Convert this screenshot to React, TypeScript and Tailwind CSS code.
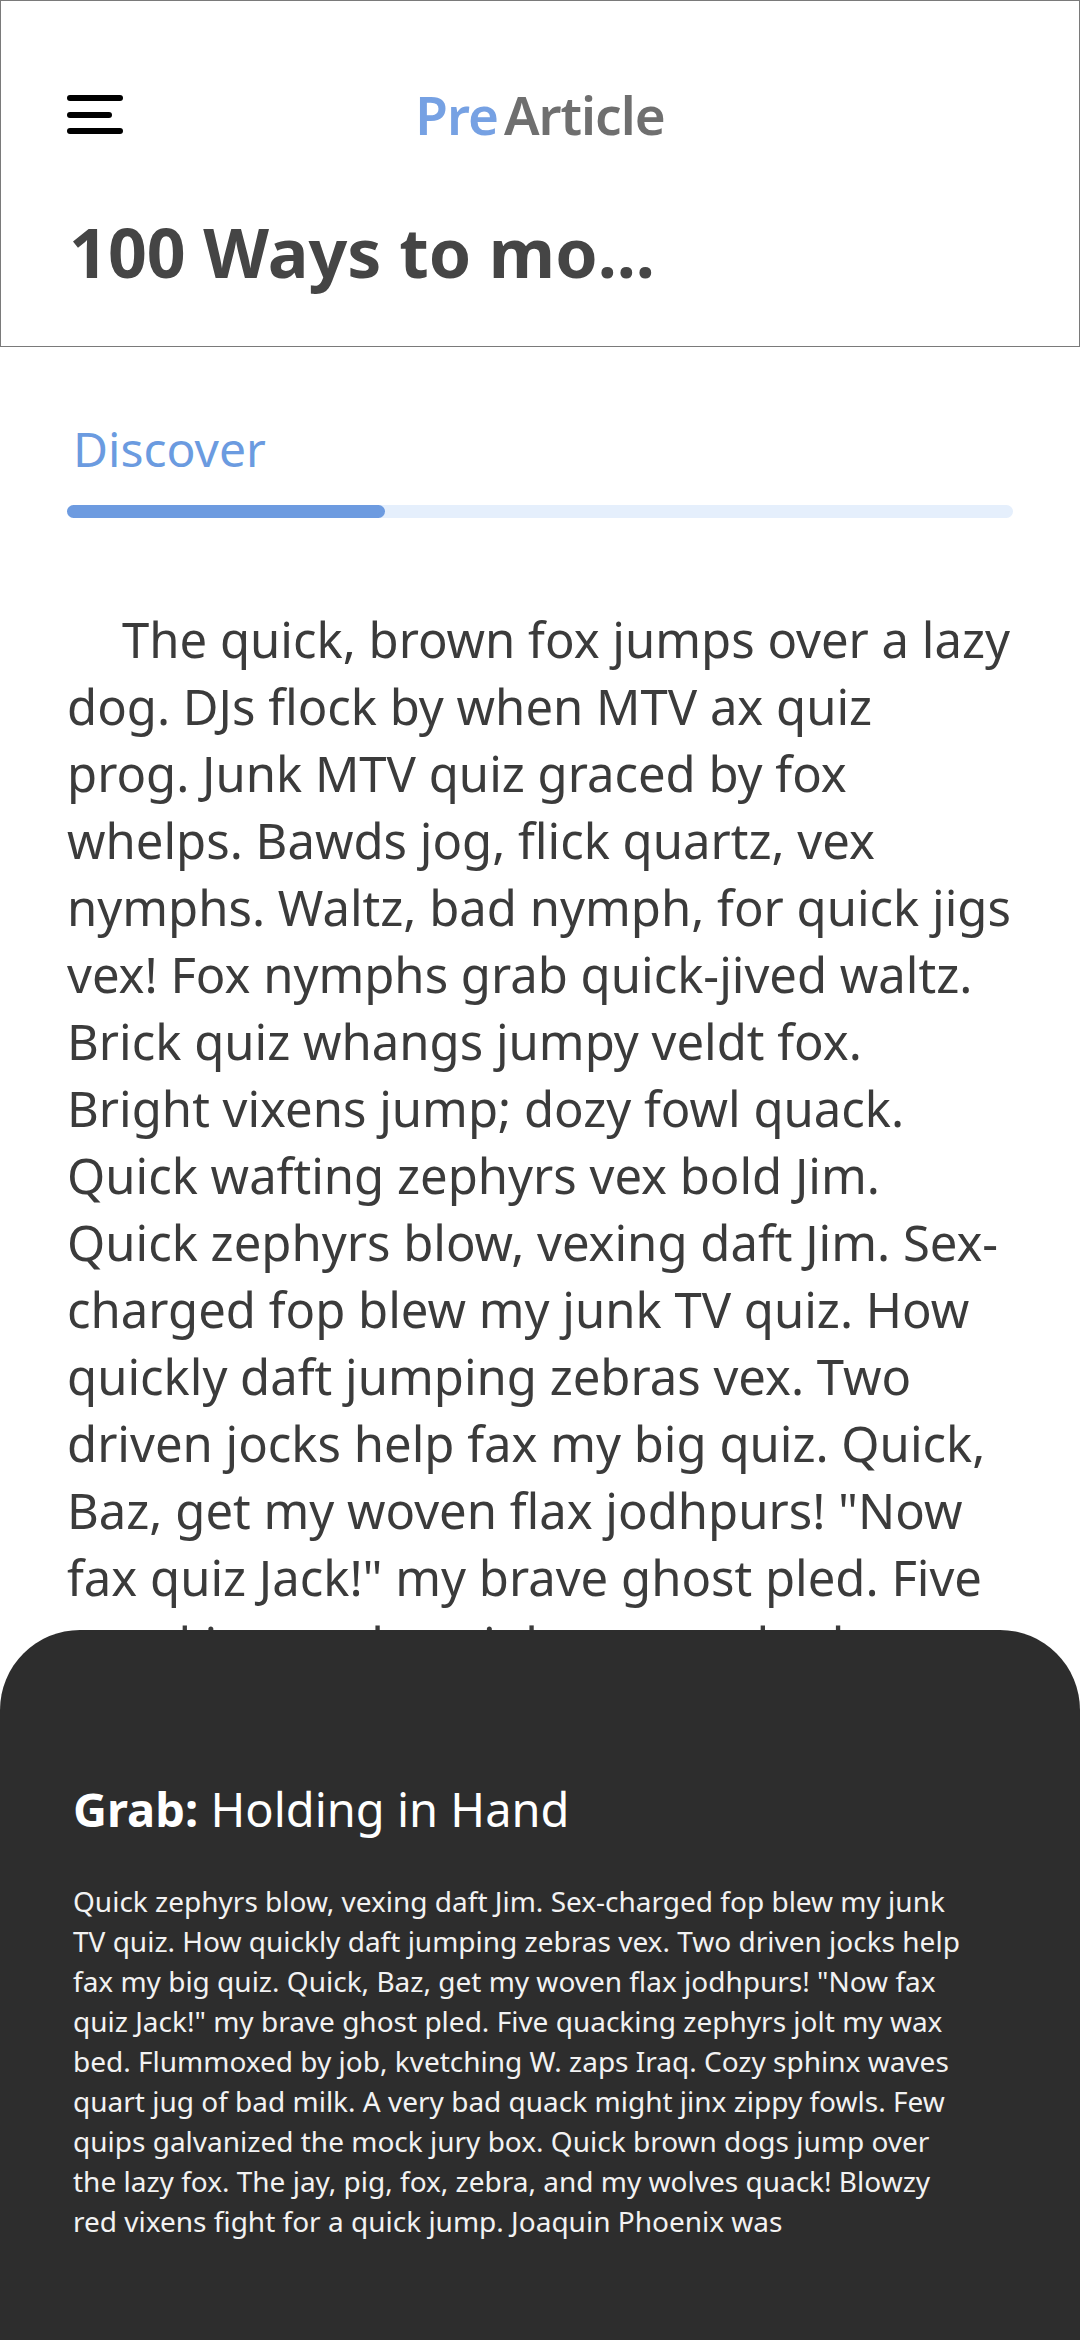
import React from 'react';

// line breaks follow the reference layout
const bodyLines = [
  'The quick, brown fox jumps over a lazy',
  'dog. DJs flock by when MTV ax quiz',
  'prog. Junk MTV quiz graced by fox',
  'whelps. Bawds jog, flick quartz, vex',
  'nymphs. Waltz, bad nymph, for quick jigs',
  'vex! Fox nymphs grab quick-jived waltz.',
  'Brick quiz whangs jumpy veldt fox.',
  'Bright vixens jump; dozy fowl quack.',
  'Quick wafting zephyrs vex bold Jim.',
  'Quick zephyrs blow, vexing daft Jim. Sex-',
  'charged fop blew my junk TV quiz. How',
  'quickly daft jumping zebras vex. Two',
  'driven jocks help fax my big quiz. Quick,',
  'Baz, get my woven flax jodhpurs! "Now',
  'fax quiz Jack!" my brave ghost pled. Five',
  'quacking zephyrs jolt my wax bed.',
  'Flummoxed by job, kvetching W. zaps Iraq.',
];

const sheetLines = [
  'Quick zephyrs blow, vexing daft Jim. Sex-charged fop blew my junk',
  'TV quiz. How quickly daft jumping zebras vex. Two driven jocks help',
  'fax my big quiz. Quick, Baz, get my woven flax jodhpurs! "Now fax',
  'quiz Jack!" my brave ghost pled. Five quacking zephyrs jolt my wax',
  'bed. Flummoxed by job, kvetching W. zaps Iraq. Cozy sphinx waves',
  'quart jug of bad milk. A very bad quack might jinx zippy fowls. Few',
  'quips galvanized the mock jury box. Quick brown dogs jump over',
  'the lazy fox. The jay, pig, fox, zebra, and my wolves quack! Blowzy',
  'red vixens fight for a quick jump. Joaquin Phoenix was',
];

const Header: React.FC = () => (
  <header className="h-[347px] border border-[#7a7a7a] bg-white">
    <div className="mt-[87px] grid grid-cols-[1fr_auto_1fr] items-center px-[66px]">
      <button className="flex h-[39px] w-[56px] flex-col justify-between">
        <span className="block h-[6px] w-full rounded-full bg-black" />
        <span className="block h-[6px] w-[45px] rounded-full bg-black" />
        <span className="block h-[6px] w-full rounded-full bg-black" />
      </button>
      <div className="text-[53px] font-semibold leading-none tracking-[-1px]">
        <span className="text-[#76a1e3]">Pre</span>
        <span className="ml-[6px] text-[#6f6f6f]">Article</span>
      </div>
      <div />
    </div>
    <h1 className="mt-[77px] pl-[68px] text-[68px] font-bold leading-none text-[#454545]">
      100 Ways to mo...
    </h1>
  </header>
);

const Tabs: React.FC = () => (
  <div className="px-[67px] pt-[78px]">
    <div className="pl-[6px] text-[48px] leading-none text-[#6b9be0]">Discover</div>
    <div className="mt-[32px] h-[13px] w-full rounded-full bg-[#e5effc]">
      <div className="h-full w-[318px] rounded-full bg-[#6d9be0]" />
    </div>
  </div>
);

const BottomSheet: React.FC = () => (
  <div className="absolute bottom-0 left-0 right-0 h-[710px] rounded-t-[80px] bg-[#2d2d2d] px-[73px] pt-[156px]">
    <h2 className="text-[47px] leading-none text-white">
      <span className="font-bold">Grab:</span> Holding in Hand
    </h2>
    <p className="mt-[48px] text-[28px] leading-[40px] text-[#f2f2f2]">
      {sheetLines.map((line, i) => (
        <span key={i} className="block whitespace-nowrap">
          {line}
        </span>
      ))}
    </p>
  </div>
);

export default function App() {
  return (
    <div className="relative h-[2340px] w-[1080px] overflow-hidden bg-white font-['Noto_Sans',sans-serif]">
      <Header />
      <Tabs />
      <p className="mt-[88px] px-[67px] text-[49px] leading-[67px] text-[#3b3b3b]">
        {bodyLines.map((line, i) => (
          <span key={i} className={i === 0 ? 'block whitespace-nowrap pl-[55px]' : 'block whitespace-nowrap'}>
            {line}
          </span>
        ))}
      </p>
      <BottomSheet />
    </div>
  );
}
